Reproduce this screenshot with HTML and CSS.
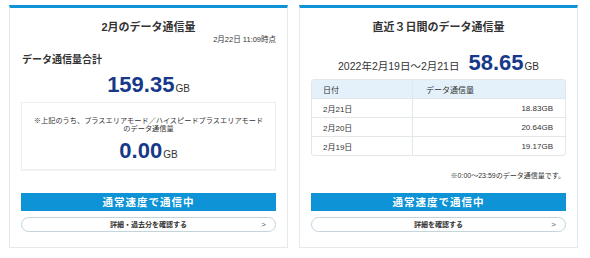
FILE: index.html
```html
<!DOCTYPE html>
<html lang="ja">
  <head>
    <meta charset="utf-8" />
    <meta name="viewport" content="width=device-width" />
    <title>データ通信量</title>
    <link rel="stylesheet" href="styles.css">
  </head>
  <body>
    <main class="cards">
      <section class="card">
        <h2 class="card-title">2月のデータ通信量</h2>
        <p class="stamp">2月22日 11:09時点</p>
        <h3 class="total-label">データ通信量合計</h3>
        <p class="amount">159.35<span class="unit">GB</span></p>
        <div class="sub-box">
          <p class="sub-note">※上記のうち、プラスエリアモード／ハイスピードプラスエリアモード<br>のデータ通信量</p>
          <p class="amount">0.00<span class="unit">GB</span></p>
        </div>
        <div class="card-foot">
          <div class="status">通常速度で通信中</div>
          <a class="more" href="#">詳細・過去分を確認する<span class="chev">&gt;</span></a>
        </div>
      </section>

      <section class="card">
        <h2 class="card-title">直近３日間のデータ通信量</h2>
        <p class="range">2022年2月19日〜2月21日<span class="amount">58.65<span class="unit">GB</span></span></p>
        <table class="usage">
          <thead>
            <tr><th>日付</th><th>データ通信量</th></tr>
          </thead>
          <tbody>
            <tr><td>2月21日</td><td class="num">18.83GB</td></tr>
            <tr><td>2月20日</td><td class="num">20.64GB</td></tr>
            <tr><td>2月19日</td><td class="num">19.17GB</td></tr>
          </tbody>
        </table>
        <p class="table-note">※0:00〜23:59のデータ通信量です。</p>
        <div class="card-foot">
          <div class="status">通常速度で通信中</div>
          <a class="more" href="#">詳細を確認する<span class="chev">&gt;</span></a>
        </div>
      </section>
    </main>
  </body>
</html>
```

FILE: styles.css
```css
body {
  margin: 0;
  background: #fff;
  color: #333;
  font-family: "Liberation Sans", "Noto Sans CJK JP", sans-serif;
}

p, h2, h3 {
  margin: 0;
}

.cards {
  display: flex;
  gap: 11px;
  padding: 5px 0 0 9px;
}

.card {
  display: flex;
  flex-direction: column;
  box-sizing: border-box;
  width: 279px;
  height: 243px;
  padding: 11px 11px 15px;
  border: 1px solid #e6e9eb;
  border-top: 3px solid #0e93d6;
}

.card-title {
  font-size: 11px;
  line-height: 16px;
  font-weight: bold;
  text-align: center;
}

.stamp {
  margin-top: 0;
  font-size: 7.5px;
  line-height: 10px;
  text-align: right;
}

.total-label {
  margin-top: 8px;
  padding-left: 1px;
  font-size: 10px;
  line-height: 14px;
  font-weight: bold;
}

.amount {
  margin-top: 6px;
  font-size: 22px;
  line-height: 24px;
  font-weight: bold;
  color: #17398a;
  text-align: center;
}

.unit {
  font-size: 10px;
  font-weight: normal;
  color: #333;
  margin-left: 1px;
}

.sub-box {
  margin-top: 1px;
  padding: 14px 0 2px;
  border: 1px solid #eceff1;
  box-shadow: 0 1px 1px rgba(0, 0, 0, 0.04);
}

.sub-note {
  font-size: 7.2px;
  line-height: 8px;
  text-align: center;
}

.sub-box .amount {
  margin-top: 6px;
}

.range {
  margin-top: 18px;
  font-size: 10.5px;
  line-height: 24px;
  text-align: center;
}

.range .amount {
  margin: 0 0 0 9px;
  line-height: 20px;
}

.usage {
  margin-top: 1px;
  width: 100%;
  border-collapse: separate;
  border-spacing: 0;
  border: 1px solid #e2e7ea;
  border-radius: 3px;
  font-size: 8px;
}

.usage th,
.usage td {
  height: 18px;
  padding: 0 12px 0 13px;
  text-align: left;
  font-weight: normal;
  border-top: 1px solid #e2e7ea;
}

.usage th {
  border-top: none;
  background: #e4f1fb;
}

.usage th:first-child,
.usage td:first-child {
  width: 77px;
  padding-left: 11px;
  border-right: 1px solid #e2e7ea;
}

.usage .num {
  text-align: right;
}

.table-note {
  margin-top: 15px;
  font-size: 7px;
  line-height: 10px;
  text-align: right;
  padding-right: 1px;
}

.card-foot {
  margin-top: auto;
}

.status {
  height: 18px;
  background: #0e93d6;
  color: #fff;
  font-size: 10.5px;
  line-height: 18px;
  font-weight: bold;
  letter-spacing: 1px;
  text-align: center;
}

.more {
  position: relative;
  display: block;
  margin-top: 6px;
  height: 15px;
  box-sizing: border-box;
  border: 1px solid #c3d5db;
  border-radius: 8px;
  color: #333;
  font-size: 7px;
  line-height: 13px;
  font-weight: bold;
  text-align: center;
  text-decoration: none;
}

.chev {
  position: absolute;
  right: 9px;
  top: 0;
  font-weight: normal;
  font-size: 8px;
  color: #555;
}
```
